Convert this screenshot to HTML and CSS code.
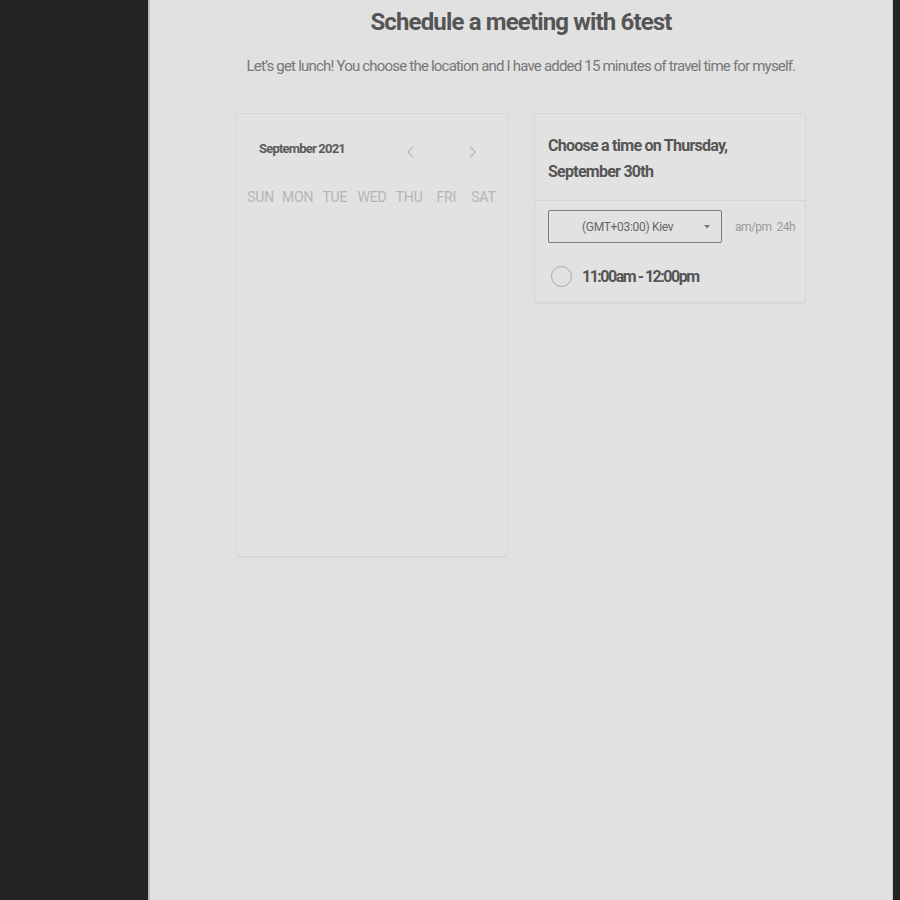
FILE: index.html
```html
<!DOCTYPE html>
<html>
<head>
<meta charset="utf-8">
<link rel="stylesheet" href="styles.css">
</head>
<body>
<div class="layout">
  <div class="side"></div>
  <main class="panel">
    <h1 class="title">Schedule a meeting with 6test</h1>
    <p class="subtitle">Let’s get lunch! You choose the location and I have added 15 minutes of travel time for myself.</p>
    <div class="cards">
      <section class="card calendar">
        <div class="cal-head">
          <span class="month">September 2021</span>
          <span class="nav">
            <svg width="10" height="14" viewBox="0 0 10 14"><path d="M7 1.5 2 7l5 5.5" fill="none" stroke="#b8b8b8" stroke-width="1.3"/></svg>
          </span>
          <span class="nav">
            <svg width="10" height="14" viewBox="0 0 10 14"><path d="M3 1.5 8 7l-5 5.5" fill="none" stroke="#b8b8b8" stroke-width="1.3"/></svg>
          </span>
        </div>
        <div class="days">
          <span>SUN</span><span>MON</span><span>TUE</span><span>WED</span><span>THU</span><span>FRI</span><span>SAT</span>
        </div>
      </section>
      <section class="card times">
        <h2 class="times-head">Choose a time on Thursday, September 30th</h2>
        <div class="times-body">
          <div class="tz-row">
            <div class="select">
              <span>(GMT+03:00) Kiev</span>
              <svg width="6" height="4" viewBox="0 0 6 4"><path d="M0 0h6L3 3.5z" fill="#777"/></svg>
            </div>
            <div class="fmt"><span>am/pm</span><span>24h</span></div>
          </div>
          <label class="slot"><span class="radio"></span><span>11:00am - 12:00pm</span></label>
        </div>
      </section>
    </div>
  </main>
  <div class="side-r"></div>
</div>
</body>
</html>
```
FILE: styles.css
```css
* { box-sizing: border-box; }
html, body { margin: 0; height: 100%; }
body {
  font-family: Roboto, "Liberation Sans", sans-serif;
  background: #242424;
}
.layout {
  display: grid;
  grid-template-columns: 148px 745px 1fr;
  height: 900px;
}
.side, .side-r { background: #242424; }
.panel {
  background: #e1e1e1;
  border-left: 2px solid #bdbdbd;
  border-right: 1px solid #c8c8c8;
  display: flex;
  flex-direction: column;
  align-items: center;
  padding-top: 7px;
}
.title {
  margin: 0;
  font-size: 24px;
  font-weight: 700;
  color: #555;
  letter-spacing: -0.85px;
  line-height: 30px;
}
.subtitle {
  margin: 19px 0 0;
  font-size: 15px;
  color: #777;
  line-height: 20px;
  letter-spacing: -0.8px;
}
.cards {
  display: flex;
  gap: 26px;
  margin-top: 37px;
}
.card {
  width: 272px;
  border: 1px solid #d6d6d6;
  border-radius: 3px;
  background: #e2e2e2;
  box-shadow: 0 1px 1px rgba(0,0,0,0.03);
}
.calendar {
  height: 444px;
  padding: 23px 5px 0 5px;
}
.cal-head {
  display: flex;
  align-items: center;
  padding-left: 17px;
}
.month {
  flex: 0 0 121px;
  white-space: nowrap;
  font-size: 13px;
  font-weight: 700;
  color: #5a5a5a;
  letter-spacing: -0.8px;
}
.nav {
  flex: 0 0 61px;
  display: flex;
  justify-content: center;
  padding-top: 8px;
}
.days {
  display: grid;
  grid-template-columns: repeat(7, 1fr);
  margin-top: 30px;
  font-size: 14px;
  color: #b5b5b5;
  text-align: center;
  letter-spacing: -0.2px;
}
.times {
  align-self: flex-start;
}
.times-head {
  margin: 0;
  padding: 19px 13px 15px;
  font-size: 16px;
  font-weight: 700;
  line-height: 26px;
  color: #555;
  letter-spacing: -0.75px;
  border-bottom: 1px solid #d6d6d6;
}
.times-body {
  padding: 9px 13px 15px;
}
.tz-row {
  display: flex;
  align-items: center;
  gap: 13px;
}
.select {
  flex-shrink: 0;
  width: 174px;
  height: 33px;
  border: 1px solid #7a7a7a;
  border-radius: 2px;
  display: flex;
  align-items: center;
  justify-content: space-between;
  padding: 0 11px 0 33px;
  font-size: 12px;
  color: #666;
  letter-spacing: -0.3px;
}
.fmt {
  display: flex;
  gap: 5px;
  font-size: 12px;
  color: #999;
  letter-spacing: -0.55px;
}
.slot {
  display: flex;
  align-items: center;
  gap: 10px;
  margin-top: 23px;
  font-size: 16px;
  font-weight: 700;
  color: #555;
  letter-spacing: -1.5px;
}
.radio {
  width: 21px;
  height: 21px;
  border-radius: 50%;
  border: 1.5px solid #aaa;
  margin-left: 3px;
}
```
